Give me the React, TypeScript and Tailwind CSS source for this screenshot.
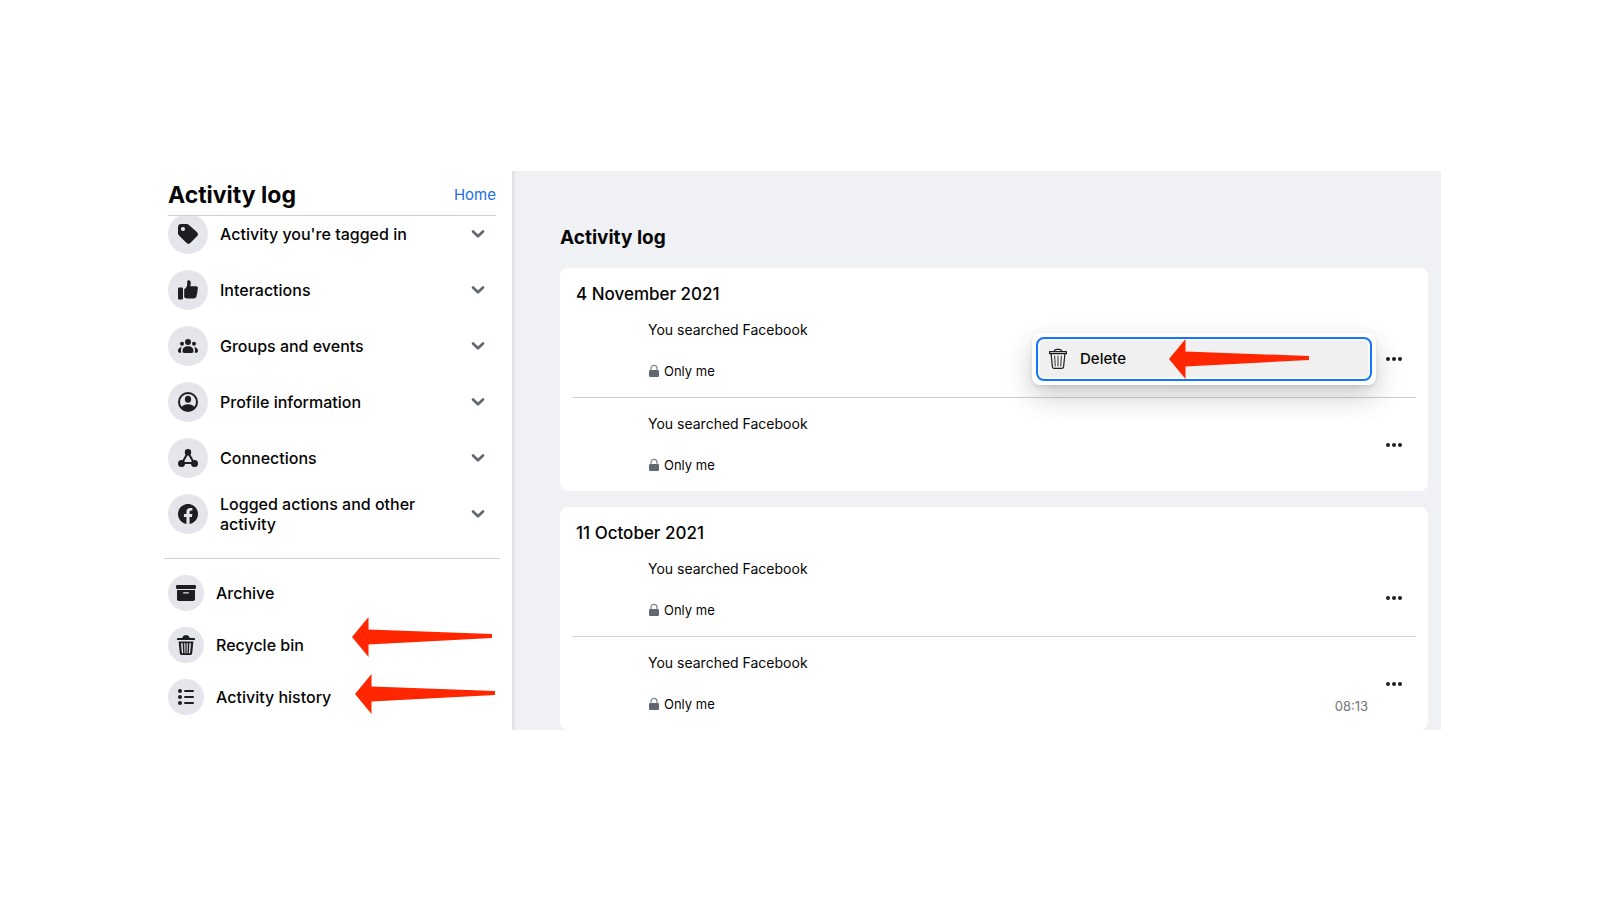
import type { ReactNode } from "react";

function TagIcon() {
  return (
    <svg viewBox="0 0 20 20" className="size-5 fill-current" aria-hidden="true">
      <path
        fillRule="evenodd"
        d="M3 0h5.600c.9 0 1.700.3 2.300.9l8.200 7.300c1.100 1.100 1.200 2.600.1 3.700l-6.900 7.200c-1.100 1.100-2.600 1.100-3.700 0L1 11.600c-.6-.6-1-1.400-1-2.300V3c0-1.700 1.300-3 3-3Zm2 2.900a2.100 2.100 0 1 0 0 4.200 2.100 2.100 0 0 0 0-4.200Z"
      />
    </svg>
  );
}

function ThumbIcon() {
  return (
    <svg viewBox="0 0 20 20" className="size-5 fill-current" aria-hidden="true">
      <rect x="0" y="7.500" width="5" height="12" rx="1.200" />
      <path d="M6.200 9.200c2-1 3-2.700 3-5.200V2C9.200.9 9.700.3 10.600.3c1.500 0 2.200 1.200 2.200 3 0 1.100-.2 1.900-.6 2.900H18c1.200 0 2 .8 2 1.900 0 .6-.2 1.100-.6 1.500.4.900.4 1.800-.2 2.500.3 1 .1 1.800-.5 2.400.1 2.700-1.100 4-3.300 4H9.800c-1.500 0-2.700-.4-3.600-1.200V9.200Z" />
    </svg>
  );
}

function GroupIcon() {
  return (
    <svg viewBox="0 0 20 20" className="size-5 fill-current" aria-hidden="true">
      <circle cx="10" cy="6" r="3" />
      <circle cx="4" cy="7.800" r="2" />
      <circle cx="16" cy="7.800" r="2" />
      <path d="M10 10.200c3.400 0 5.500 1.900 5.500 4.800 0 1.200-.6 1.900-1.700 1.900H6.200c-1.100 0-1.700-.7-1.700-1.900 0-2.900 2.100-4.800 5.500-4.800Z" />
      <path d="M3.700 11c-2.300.2-3.700 1.700-3.700 4 0 1 .5 1.700 1.500 1.700h1.800c-.6-2.100-.4-4 .4-5.700ZM16.300 11c2.300.2 3.700 1.700 3.700 4 0 1-.5 1.700-1.500 1.700h-1.800c.6-2.100.4-4-.4-5.700Z" />
    </svg>
  );
}

function ProfileIcon() {
  return (
    <svg viewBox="0 0 20 20" className="size-5 fill-current" aria-hidden="true">
      <circle cx="10" cy="10" r="9" fill="none" stroke="currentColor" strokeWidth="2" />
      <ellipse cx="10" cy="7.300" rx="3.100" ry="3.500" />
      <path d="M3.200 15.400c1.500-2.200 4-3.200 6.800-3.200s5.300 1 6.800 3.200A9 9 0 0 1 10 19a9 9 0 0 1-6.800-3.600Z" />
    </svg>
  );
}

function ConnectionsIcon() {
  return (
    <svg viewBox="0 0 20 20" className="size-5 fill-current" aria-hidden="true">
      <path d="M10 4.500 4 15h12L10 4.500Z" fill="none" stroke="currentColor" strokeWidth="2" />
      <circle cx="10" cy="4.200" r="3.200" />
      <circle cx="3.500" cy="15.500" r="3.500" />
      <circle cx="16.500" cy="15.500" r="3.500" />
    </svg>
  );
}

function FacebookIcon() {
  return (
    <svg viewBox="0 0 24 24" className="size-5 fill-current" aria-hidden="true">
      <path d="M24 12.070C24 5.410 18.630 0 12 0S0 5.410 0 12.070C0 18.100 4.390 23.090 10.130 24v-8.440H7.080v-3.490h3.050V9.410c0-3.020 1.790-4.690 4.530-4.690 1.310 0 2.680.24 2.680.24v2.970h-1.510c-1.490 0-1.960.93-1.960 1.890v2.250h3.330l-.53 3.490h-2.800V24C19.610 23.090 24 18.100 24 12.070Z" />
    </svg>
  );
}

function ArchiveIcon() {
  return (
    <svg viewBox="0 0 20 20" className="size-5 fill-current" aria-hidden="true">
      <rect x="0" y="2" width="20" height="4" rx="1.200" />
      <path
        fillRule="evenodd"
        d="M1 7h18v9c0 1.200-.8 2-2 2H3c-1.200 0-2-.8-2-2V7Zm6.600 2.200a.6.6 0 0 0 0 1.200h4.800a.6.6 0 0 0 0-1.200H7.600Z"
      />
    </svg>
  );
}

function BinIcon() {
  return (
    <svg viewBox="0 0 20 20" className="size-5 fill-current" aria-hidden="true">
      <path d="M1.800 3h3.400c.8 0 1.200-.3 1.600-1C7.300.8 8 .2 9.200.2h1.600c1.200 0 1.900.6 2.400 1.800.4.700.8 1 1.600 1h3.400c.5 0 .8.400.8.900v1.200H1V3.900c0-.5.3-.9.800-.9Z" />
      <path
        fillRule="evenodd"
        d="M2.600 6.500h14.800l-1.200 11.400c-.2 1.400-.9 2-2.200 2H6c-1.300 0-2-.6-2.200-2L2.600 6.500Zm2.400 1.700.9 9.500c0 .4.300.6.600.6h.7l-.6-10.100H5Zm3.200 0 .3 10.100h.9V8.200H8.200Zm2.400 0v10.100h.9l.3-10.100h-1.200Zm2.800 0-.6 10.100h.7c.3 0 .6-.2.6-.6l.9-9.500h-1.600Z"
      />
    </svg>
  );
}

function ListIcon() {
  return (
    <svg viewBox="0 0 20 20" className="size-5 fill-current" aria-hidden="true">
      <circle cx="4" cy="4" r="2" />
      <circle cx="4" cy="10" r="2" />
      <circle cx="4" cy="16" r="2" />
      <rect x="8" y="3" width="10" height="2" rx="1" />
      <rect x="8" y="9" width="10" height="2" rx="1" />
      <rect x="8" y="15" width="10" height="2" rx="1" />
    </svg>
  );
}

function ChevronIcon() {
  return (
    <svg viewBox="0 0 14 10" className="h-[10px] w-[14px] shrink-0" aria-hidden="true">
      <path d="m2 2.500 5 4.800 5-4.800" fill="none" stroke="#606770" strokeWidth="2.600" strokeLinecap="round" strokeLinejoin="round" />
    </svg>
  );
}

function LockIcon() {
  return (
    <svg viewBox="0 0 12 14" className="h-[14px] w-3" aria-hidden="true">
      <rect x="1" y="6" width="10" height="7" rx="1.200" fill="#606770" />
      <path d="M3 6.500V4.300a3 3 0 0 1 6 0v2.200" fill="none" stroke="#7f858c" strokeWidth="1.200" />
    </svg>
  );
}

function OutlineBinIcon() {
  return (
    <svg viewBox="0 0 20 22" className="h-[22px] w-5 shrink-0" fill="none" stroke="#1c1e21" strokeWidth="1.200" strokeLinejoin="round" aria-hidden="true">
      <path d="M1.600 3.700h16.800v2H1.600zM5.800 3.700c.5-1.700 1.400-2.400 2.800-2.400h2.800c1.400 0 2.300.7 2.800 2.400" />
      <path d="m3.100 6 1.300 12.600c.1 1.200.8 1.800 2 1.800h7.200c1.200 0 1.900-.6 2-1.800L16.900 6" />
      <path d="m6.600 8.200.7 9.800M10 8.200V18M13.400 8.200l-.7 9.800" stroke="#505357" strokeLinecap="round" />
    </svg>
  );
}

function RedArrow() {
  return (
    <svg viewBox="0 0 140 40" className="h-10 w-[140px] shrink-0" aria-hidden="true">
      <path d="M0 20 16.500 0v12.500L140 17v4L16.500 27.500V40L0 20Z" fill="#ff2600" />
    </svg>
  );
}

const categories: { label: string; icon: ReactNode }[] = [
  { label: "Activity you're tagged in", icon: <TagIcon /> },
  { label: "Interactions", icon: <ThumbIcon /> },
  { label: "Groups and events", icon: <GroupIcon /> },
  { label: "Profile information", icon: <ProfileIcon /> },
  { label: "Connections", icon: <ConnectionsIcon /> },
  { label: "Logged actions and other activity", icon: <FacebookIcon /> },
];

const tools: { label: string; icon: ReactNode; arrow?: string }[] = [
  { label: "Archive", icon: <ArchiveIcon /> },
  { label: "Recycle bin", icon: <BinIcon />, arrow: "right-1 top-[-2px]" },
  { label: "Activity history", icon: <ListIcon />, arrow: "right-px top-[3px]" },
];

const days: { date: string; entries: { id: number; menu?: boolean; time?: string }[] }[] = [
  { date: "4 November 2021", entries: [{ id: 1, menu: true }, { id: 2 }] },
  { date: "11 October 2021", entries: [{ id: 3 }, { id: 4, time: "08:13" }] },
];

function Sidebar() {
  return (
    <aside className="w-[352px] shrink-0 bg-white pr-4 pl-2">
      <header className="relative z-10 flex h-[45px] items-center justify-between border-b border-[#ced0d4] bg-white pt-[5px]">
        <h1 className="text-[23px] font-bold">Activity log</h1>
        <a href="#home" className="text-[15px] text-[#216fdb]">
          Home
        </a>
      </header>
      <ul className="-mt-[10px]">
        {categories.map((item) => (
          <li key={item.label}>
            <button type="button" className="flex h-14 w-full items-center gap-3 pr-[11px] text-left">
              <span className="grid size-10 shrink-0 place-items-center rounded-full bg-[#e4e6eb] text-[#1c1e21]">{item.icon}</span>
              <span className="flex-1 pr-10 text-base leading-5 font-medium">{item.label}</span>
              <ChevronIcon />
            </button>
          </li>
        ))}
      </ul>
      <hr className="-mx-1 mt-4 mb-2 border-[#ced0d4]" />
      <ul>
        {tools.map((item) => (
          <li key={item.label} className="relative">
            <button type="button" className="flex h-[52px] w-full items-center gap-3 text-left">
              <span className="grid size-9 shrink-0 place-items-center rounded-full bg-[#e4e6eb] text-[#1c1e21]">{item.icon}</span>
              <span className="text-base leading-5 font-medium">{item.label}</span>
            </button>
            {item.arrow && (
              <span className={"pointer-events-none absolute " + item.arrow}>
                <RedArrow />
              </span>
            )}
          </li>
        ))}
      </ul>
    </aside>
  );
}

function DeleteMenu() {
  return (
    <div className="absolute top-[13px] right-10 z-20 w-[344px] rounded-lg bg-white p-1 shadow-[0_12px_28px_rgba(0,0,0,0.2),0_2px_4px_rgba(0,0,0,0.1)]">
      <button type="button" className="flex h-11 w-full items-center gap-3 rounded-lg border-2 border-[#1877f2] bg-[#f0f0f0] pl-[10px] text-[15px] font-medium shadow-[inset_0_0_0_2px_#f7f8fa]">
        <OutlineBinIcon />
        Delete
      </button>
      <span className="pointer-events-none absolute top-[6px] left-[137px]">
        <RedArrow />
      </span>
    </div>
  );
}

function Entry({ menu, time }: { menu?: boolean; time?: string }) {
  return (
    <li className="group border-t border-[#ced0d4] first:border-t-0">
      <div className="relative flex items-center pt-4 pr-1 pl-[76px] group-first:pt-0">
        <div className="flex-1 pb-[18px]">
          <p className="text-sm leading-5">You searched Facebook</p>
          <p className="mt-[23px] flex items-center gap-1 text-[13px] leading-4">
            <LockIcon />
            Only me
          </p>
        </div>
        {time && <time className="self-end pr-2 pb-4 text-[13px] leading-4 text-[#737578]">{time}</time>}
        <div className="-mt-4 flex items-center self-stretch group-first:mt-0">
          <button type="button" aria-label="More options" className="grid size-9 place-items-center">
            <svg viewBox="0 0 16 4" className="h-1 w-4 fill-[#1c1e21]" aria-hidden="true">
              <circle cx="2" cy="2" r="2" />
              <circle cx="8" cy="2" r="2" />
              <circle cx="14" cy="2" r="2" />
            </svg>
          </button>
        </div>
        {menu && <DeleteMenu />}
      </div>
    </li>
  );
}

export default function App() {
  return (
    <div className="min-h-screen bg-white pt-[171px] pr-[159px] pb-[170px] pl-40 font-['Inter',sans-serif] text-[#050505]">
      <div className="flex">
        <Sidebar />
        <main className="min-w-0 flex-1 bg-[#f0f1f5] pt-[55px] pr-[13px] pl-12 shadow-[inset_5px_0_4px_-4px_rgba(0,0,0,0.12)]">
          <h2 className="text-[19px] leading-6 font-bold">Activity log</h2>
          <div className="mt-[18px] flex flex-col gap-4">
            {days.map((day) => (
              <section key={day.date} className="rounded-lg bg-white px-3 pt-4">
                <h3 className="mb-4 px-1 text-[17px] leading-5 font-medium">{day.date}</h3>
                <ul>
                  {day.entries.map((entry) => (
                    <Entry key={entry.id} menu={entry.menu} time={entry.time} />
                  ))}
                </ul>
              </section>
            ))}
          </div>
        </main>
      </div>
    </div>
  );
}
